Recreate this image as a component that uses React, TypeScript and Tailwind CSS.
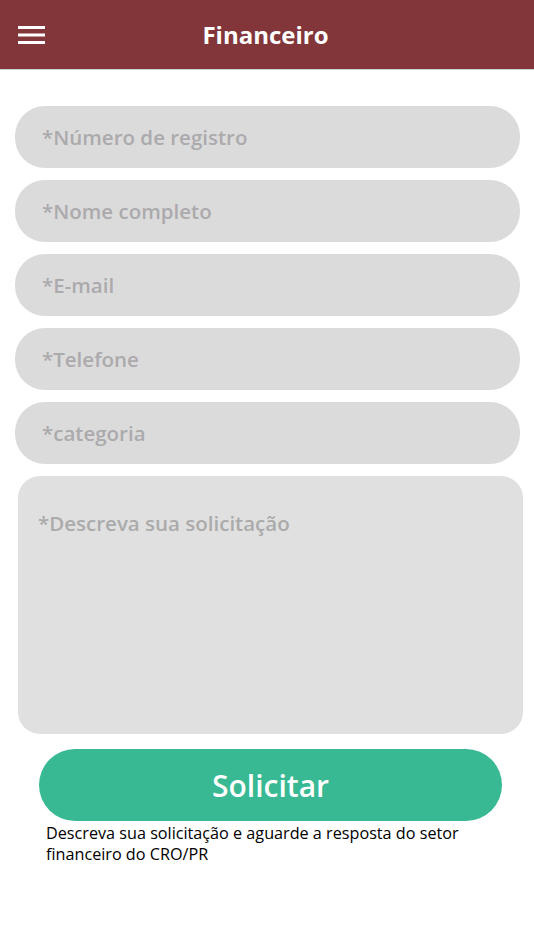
const fields = ['*Número de registro', '*Nome completo', '*E-mail', '*Telefone', '*categoria']

function Hamburger() {
  return (
    <svg width="28" height="20" viewBox="0 0 28 20" className="block">
      <rect x="0" y="0" width="27" height="3" fill="#fff" />
      <rect x="0" y="7.5" width="27" height="3" fill="#fff" />
      <rect x="0" y="15" width="27" height="3" fill="#fff" />
    </svg>
  )
}

export default function App() {
  return (
    <div className="min-h-[950px] w-[534px] bg-white" style={{ fontFamily: '"Open Sans", sans-serif' }}>
      <header className="relative flex h-[70px] items-center justify-center border-b border-[#c9d3d6] bg-[#82363a] pr-[3px]">
        <button className="absolute left-[18px] top-[26px]">
          <Hamburger />
        </button>
        <h1 className="text-[24px] font-bold text-white">Financeiro</h1>
      </header>

      <div className="flex flex-col gap-3 px-[15px] pt-[36px]">
        {fields.map((f) => (
          <div key={f} className="flex h-[62px] w-[505px] items-center rounded-[30px] bg-[#dcdbdb] pl-[27px] text-[20.5px] font-semibold text-[#abaaad]">
            {f}
          </div>
        ))}
      </div>

      <div className="mx-[18px] mt-3 h-[258px] w-[505px] rounded-[22px] bg-[#e0e0e0] px-[20px] pt-[32px] text-[20.5px] font-semibold text-[#ababab]">
        *Descreva sua solicitação
      </div>

      <div className="px-[39px] pt-[15px]">
        <button className="flex h-[72px] w-[463px] items-center justify-center rounded-[36px] bg-[#38b993] text-[30px] font-semibold text-white">
          Solicitar
        </button>
      </div>

      <p className="px-[46px] pt-[2px] text-[16.2px] leading-[21px] text-black">
        Descreva sua solicitação e aguarde a resposta do setor financeiro do CRO/PR
      </p>
    </div>
  )
}
